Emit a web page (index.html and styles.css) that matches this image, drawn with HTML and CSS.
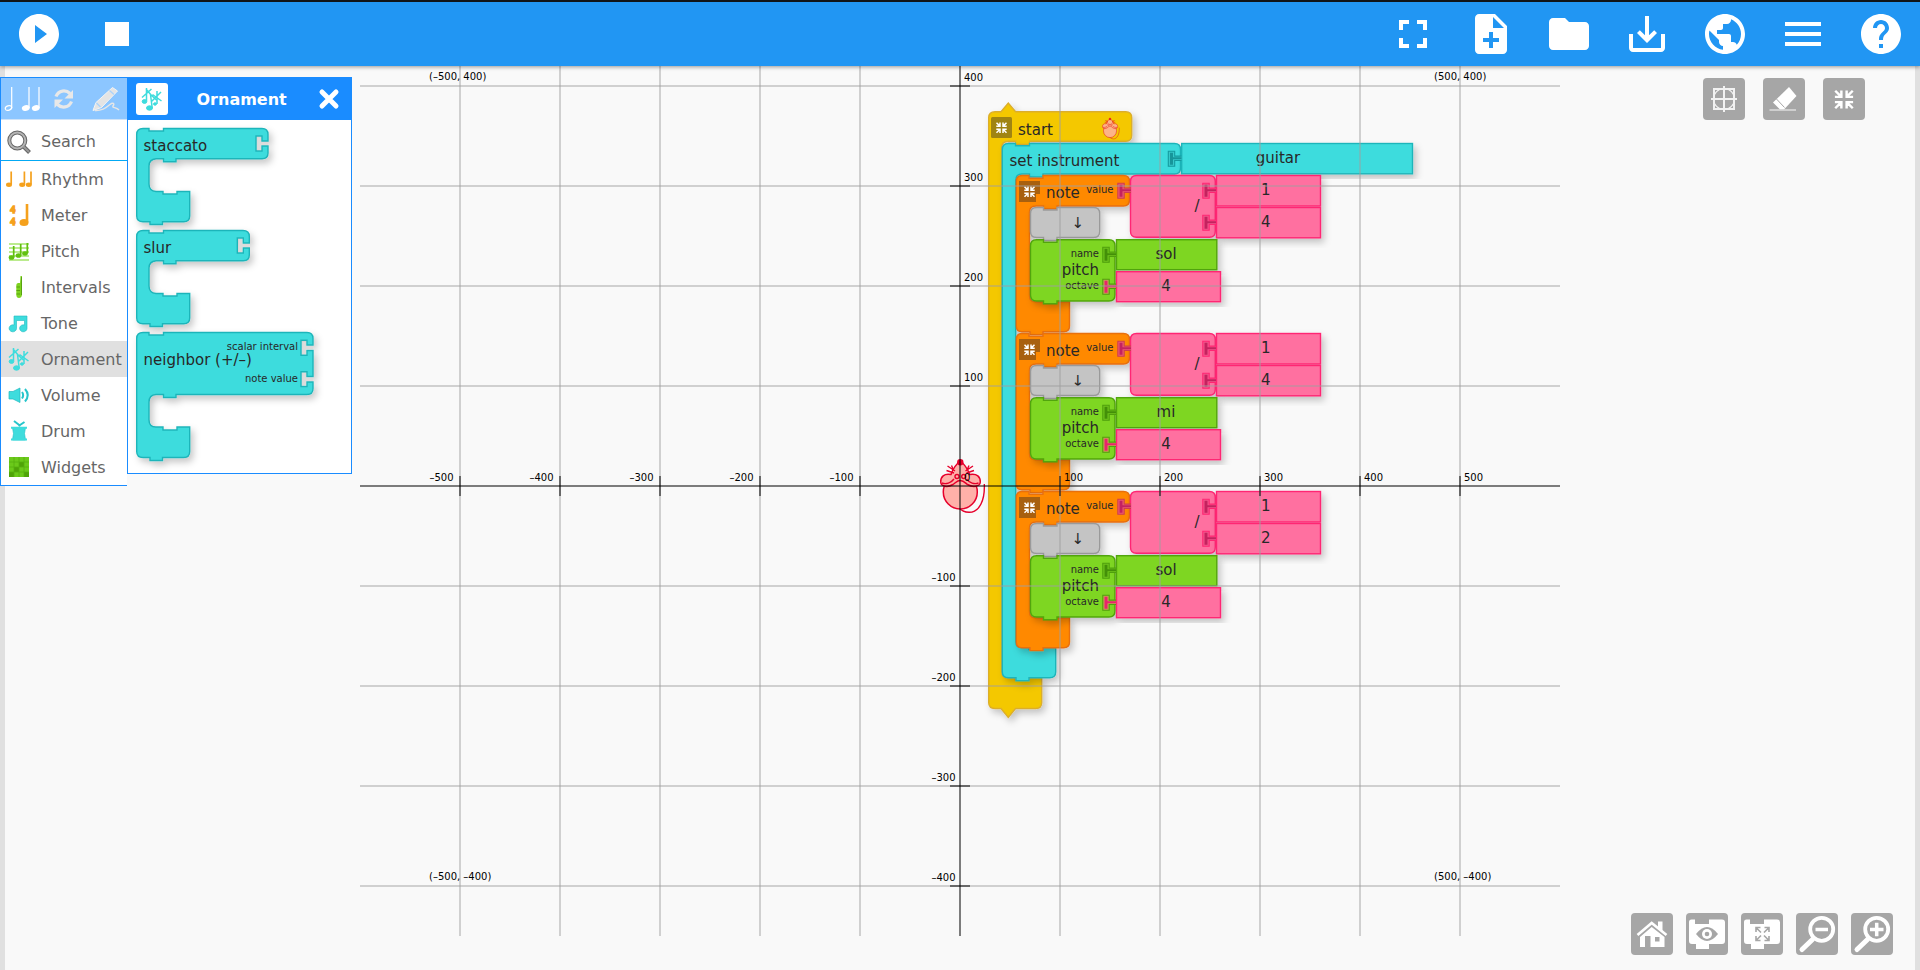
FILE: index.html
```html
<!DOCTYPE html>
<html lang="en">
<head>
<meta charset="utf-8">
<title>Music Blocks</title>
<link rel="stylesheet" href="styles.css">
</head>
<body>
<header class="navbar">
  <div class="nav-group">
    <button class="nav-btn" aria-label="Play"><svg viewBox="0 0 24 24"><path d="M12 2C6.48 2 2 6.48 2 12s4.48 10 10 10 10-4.48 10-10S17.52 2 12 2zm-2 14.5v-9l6 4.5-6 4.5z"/></svg></button>
    <button class="nav-btn" aria-label="Stop"><svg viewBox="0 0 24 24"><path d="M6 6h12v12H6z"/></svg></button>
  </div>
  <div class="nav-group">
    <button class="nav-btn" aria-label="Full screen"><svg viewBox="0 0 24 24"><path d="M7 14H5v5h5v-2H7v-3zm-2-4h2V7h3V5H5v5zm12 7h-3v2h5v-5h-2v3zM14 5v2h3v3h2V5h-5z"/></svg></button>
    <button class="nav-btn" aria-label="New project"><svg viewBox="0 0 24 24"><path d="M14 2H6c-1.1 0-1.99.9-1.99 2L4 20c0 1.1.89 2 1.99 2H18c1.1 0 2-.9 2-2V8l-6-6zm2 14h-3v3h-2v-3H8v-2h3v-3h2v3h3v2zm-3-7V3.5L18.5 9H13z"/></svg></button>
    <button class="nav-btn" aria-label="Load project"><svg viewBox="0 0 24 24"><path d="M10 4H4c-1.1 0-1.99.9-1.99 2L2 18c0 1.1.9 2 2 2h16c1.1 0 2-.9 2-2V8c0-1.1-.9-2-2-2h-8l-2-2z"/></svg></button>
    <button class="nav-btn" aria-label="Save project"><svg viewBox="0 0 24 24"><path d="M19 12v7H5v-7H3v7c0 1.1.9 2 2 2h14c1.1 0 2-.9 2-2v-7h-2zm-6 .67l2.59-2.58L17 11.5l-5 5-5-5 1.41-1.41L11 12.67V3h2v9.67z"/></svg></button>
    <button class="nav-btn" aria-label="Planet"><svg viewBox="0 0 24 24"><path d="M12 2C6.48 2 2 6.48 2 12s4.48 10 10 10 10-4.48 10-10S17.52 2 12 2zm-1 17.93c-3.95-.49-7-3.85-7-7.93 0-.62.08-1.21.21-1.79L9 15v1c0 1.1.9 2 2 2v1.930zm6.900-2.540c-.26-.81-1-1.390-1.900-1.390h-1v-3c0-.55-.45-1-1-1H8v-2h2c.55 0 1-.45 1-1V7h2c1.100 0 2-.9 2-2v-.41c2.930 1.190 5 4.060 5 7.410 0 2.080-.8 3.970-2.100 5.390z"/></svg></button>
    <button class="nav-btn" aria-label="Menu"><svg viewBox="0 0 24 24"><path d="M3 18h18v-2H3v2zm0-5h18v-2H3v2zm0-7v2h18V6H3z"/></svg></button>
    <button class="nav-btn" aria-label="Help"><svg viewBox="0 0 24 24"><path d="M12 2C6.48 2 2 6.48 2 12s4.48 10 10 10 10-4.48 10-10S17.52 2 12 2zm1 17h-2v-2h2v2zm2.070-7.750l-.9.92C13.450 12.900 13 13.500 13 15h-2v-.5c0-1.100.45-2.100 1.170-2.830l1.240-1.260c.37-.36.59-.86.59-1.410 0-1.100-.9-2-2-2s-2 .9-2 2H8c0-2.210 1.790-4 4-4s4 1.790 4 4c0 .88-.36 1.680-.93 2.250z"/></svg></button>
  </div>
</header>

<main class="stage">
<svg class="canvas" viewBox="0 66 1920 904" width="1920" height="904">
  <defs>
    <filter id="shadow" x="-10%" y="-10%" width="125%" height="125%"><feDropShadow dx="3" dy="4" stdDeviation="3.500" flood-color="#000" flood-opacity="0.22"/></filter>
    <g id="plug"><path d="M14 5.800H7.200V1H.8V16H7.200V10.200H14"/><path fill="currentColor" stroke="none" d="M2.500 2.500H5.500V7H14V9H5.500V14.500H2.500Z"/></g>
    <g id="shrink" fill="none" stroke-width="1.500"><path d="M-5-5L-1.800-1.800M5-5L1.800-1.800M-5 5L-1.800 1.800M5 5L1.800 1.800M-5.200-1.500H-1.500V-5.200M5.200-1.500H1.500V-5.200M-5.200 1.500H-1.500V5.200M5.200 1.500H1.500V5.200"/></g>
    <g id="mouse">
      <path class="m-line" d="M984.300 484C985 500 979.500 512.500 969 512.300C964 512 961 510 959.500 508"/>
      <circle class="m-skin" cx="960.300" cy="492" r="17"/>
      <path class="m-skin" d="M960.300 461C955 465 952.500 470 951 474.500C944 473 940.500 477 940.700 482C941 487 948 487.500 953 484.500C956 482.500 957 480.500 960.300 480.500C963.500 480.500 965 482.500 967.500 484.500C972.500 487.500 980 487 980.300 482C980.500 477 977 473 969.700 474.500C968 470 965.500 465 960.300 461Z"/>
      <path class="m-line" d="M942 483C946 484.500 951 483 954 479M978.500 483C974.500 484.500 969.500 483 966.500 479M955 471L947.500 466M954 473L946.500 470.500M953.500 470L951.500 465.500M965.500 471L973 466M966.500 473L974 470.500M967 470L969 465.500"/>
      <circle class="m-line" cx="957" cy="476.500" r="2"/><circle class="m-line" cx="963.700" cy="476.500" r="2"/>
      <circle class="m-nose" cx="960.300" cy="462.300" r="3.200"/>
    </g>
    <g id="note">
      <path class="blk orange" filter="url(#shadow)" d="M1022 175.500H1029V178.200H1043V175.500H1123.500Q1129.500 175.500 1129.500 181.500V200Q1129.500 206 1123.500 206H1057V209H1043.500V206H1036Q1029.500 206 1029.500 212V295.700Q1029.500 301.700 1036 301.700H1043V304H1057V301.700H1069.500V326Q1069.500 331.800 1063.500 331.800H1043V334.600H1030V331.800H1022Q1016.300 331.800 1016.300 326V181.500Q1016.300 175.500 1022 175.500Z"/>
      <path class="btn-note" d="M1019 181H1040V194H1036V202H1019Z"/>
      <use href="#shrink" x="1029.500" y="191.700" stroke="#fff"/>
      <text class="t" x="1046" y="198">note</text>
      <text class="s" x="1113.500" y="193" text-anchor="end">value</text>
      <path class="blk pink" filter="url(#shadow)" d="M1136.500 175.500H1209.500Q1215.300 175.500 1215.300 181.500V231.300Q1215.300 237.300 1209.500 237.300H1136.500Q1130.500 237.300 1130.500 231.300V181.500Q1130.500 175.500 1136.500 175.500Z"/>
      <use href="#plug" class="pl pl-pink-orange" x="1117" y="182.300"/>
      <text class="t" x="1197" y="211" text-anchor="middle">/</text>
      <g filter="url(#shadow)"><rect class="blk pink" x="1216.500" y="175.500" width="104" height="30.500"/><rect class="blk pink" x="1216.500" y="207.500" width="104" height="30.300"/></g>
      <use href="#plug" class="pl pl-pink" x="1202" y="182.300"/><use href="#plug" class="pl pl-pink" x="1202" y="214.300"/>
      <path class="blk grey" filter="url(#shadow)" d="M1036.500 207.500H1043.500V210H1057V207.500H1093.700Q1099.700 207.500 1099.700 213.500V231.500Q1099.700 237.500 1093.700 237.500H1057V240.500H1043.500V237.500H1036.500Q1030.500 237.500 1030.500 231.500V213.500Q1030.500 207.500 1036.500 207.500Z"/>
      <text class="t" x="1077.700" y="228" text-anchor="middle">↓</text>
      <path class="blk green" filter="url(#shadow)" d="M1036.500 239.700H1043.500V242.200H1057V239.700H1109Q1115 239.700 1115 245.700V295Q1115 301 1109 301H1057V303.700H1043.500V301H1036.500Q1030.500 301 1030.500 295V245.700Q1030.500 239.700 1036.500 239.700Z"/>
      <text class="s" x="1099" y="257" text-anchor="end">name</text>
      <text class="t" x="1099" y="275" text-anchor="end">pitch</text>
      <text class="s" x="1099" y="289" text-anchor="end">octave</text>
      <rect class="blk green" filter="url(#shadow)" x="1116.500" y="239.700" width="100.300" height="30"/>
      <rect class="blk pink" filter="url(#shadow)" x="1116.500" y="271.700" width="104" height="30"/>
      <use href="#plug" class="pl pl-green" x="1102" y="246.300"/><use href="#plug" class="pl pl-pink-green" x="1102" y="278.300"/>
      <text class="t" x="1265.800" y="194.700" text-anchor="middle">1</text>
      <text class="t" x="1166" y="291" text-anchor="middle">4</text>
    </g>
  </defs>

  <path class="blk yellow" filter="url(#shadow)" d="M995 111.700H1001L1008.300 103L1015.600 111.700H1125.700Q1131.700 111.700 1131.700 117.700V135.300Q1131.700 141.300 1125.700 141.300H1029.500V144.500H1015.500V141.300H1008Q1001.700 141.300 1001.700 148V672Q1001.700 678 1008 678H1015V680H1029V678H1041.700V702.500Q1041.700 708.500 1035.700 708.500H1015.500L1008.300 717.500L1001 708.500H995Q988.700 708.500 988.700 702.500V117.700Q988.700 111.700 995 111.700Z"/>
  <rect class="btn-start" x="991" y="117" width="21" height="21" rx="1.500"/>
  <use href="#shrink" x="1001.500" y="127.700" stroke="#fff"/>
  <text class="t" x="1018" y="135">start</text>
  <use class="mini" href="#mouse" transform="translate(740.300 -66) scale(.385 .4)"/>
  <path class="blk teal" filter="url(#shadow)" d="M1008.500 143.500H1015.500V145.700H1029.500V143.500H1174.500Q1180.500 143.500 1180.500 149.500V168Q1180.500 174 1174.500 174H1043V177H1029.500V174H1022Q1015.700 174 1015.700 180.500V641.700Q1015.700 647.700 1022 647.700H1029V649.500H1043V647.700H1055.700V672Q1055.700 677.700 1049.700 677.700H1029V680.700H1016V677.700H1008.500Q1002.300 677.700 1002.300 672V149.500Q1002.300 143.500 1008.500 143.500Z"/>
  <text class="t" x="1009.500" y="166">set instrument</text>
  <rect class="blk teal" filter="url(#shadow)" x="1181.700" y="143.500" width="230.800" height="30.300"/>
  <use href="#plug" class="pl pl-teal" x="1167.500" y="150.300"/>
  <text class="t" x="1278" y="162.700" text-anchor="middle">guitar</text>

  <use href="#note"/>
  <text class="t" x="1265.800" y="226.700" text-anchor="middle">4</text>
  <text class="t" x="1166" y="259" text-anchor="middle">sol</text>
  <use href="#note" y="158"/>
  <text class="t" x="1265.800" y="384.700" text-anchor="middle">4</text>
  <text class="t" x="1166" y="417" text-anchor="middle">mi</text>
  <use href="#note" y="316"/>
  <text class="t" x="1265.800" y="542.700" text-anchor="middle">2</text>
  <text class="t" x="1166" y="575" text-anchor="middle">sol</text>

  <use href="#mouse"/>

  <!-- cartesian grid and axes -->
  <path class="grid" d="M460 66V936M560 66V936M660 66V936M760 66V936M860 66V936M1060 66V936M1160 66V936M1260 66V936M1360 66V936M1460 66V936"/>
  <path class="grid" d="M360 86H1560M360 186H1560M360 286H1560M360 386H1560M360 586H1560M360 686H1560M360 786H1560M360 886H1560"/>
  <path class="axis" d="M960 66V936"/>
  <path class="axis" d="M360 486H1560"/>
  <path class="axis" d="M460 476V496M560 476V496M660 476V496M760 476V496M860 476V496M1060 476V496M1160 476V496M1260 476V496M1360 476V496M1460 476V496M950 86H970M950 186H970M950 286H970M950 386H970M950 586H970M950 686H970M950 786H970M950 886H970"/>
  <g class="lbl">
    <text x="429" y="80">(–500, 400)</text><text x="1434" y="80">(500, 400)</text>
    <text x="429" y="880">(–500, –400)</text><text x="1434" y="880">(500, –400)</text>
    <text x="964" y="81">400</text><text x="964" y="181">300</text><text x="964" y="281">200</text><text x="964" y="381">100</text>
    <text x="964" y="481">0</text>
    <text x="1064" y="481">100</text><text x="1164" y="481">200</text><text x="1264" y="481">300</text><text x="1364" y="481">400</text><text x="1464" y="481">500</text>
  </g>
  <g class="lbl" text-anchor="end">
    <text x="453.500" y="481">–500</text><text x="553.500" y="481">–400</text><text x="653.500" y="481">–300</text><text x="753.500" y="481">–200</text><text x="853.500" y="481">–100</text>
    <text x="955.500" y="581">–100</text><text x="955.500" y="681">–200</text><text x="955.500" y="781">–300</text><text x="955.500" y="881">–400</text>
  </g>
</svg>

<aside class="palette">
  <nav class="sidebar">
    <div class="tabs">
      <svg width="42" height="41" viewBox="0 0 42 41"><g fill="none" stroke="#fff" stroke-width="1.200"><path d="M10.700 9V30M28 9V30M38 9V30"/><ellipse cx="7.500" cy="30" rx="3.300" ry="2.200" transform="rotate(-20 7.500 30)"/></g><g fill="#fff"><ellipse cx="24.800" cy="30" rx="4" ry="2.900" transform="rotate(-15 24.800 30)"/><ellipse cx="34.800" cy="30" rx="4" ry="2.900" transform="rotate(-15 34.800 30)"/></g></svg>
      <svg width="42" height="41" viewBox="0 0 42 41"><g fill="none" stroke="#e8e8e8" stroke-width="3.200"><path d="M13 18.500C15.500 12 23 11.500 27 15.500"/><path d="M28.500 23.500C26 30 18.500 30.500 14.500 26.500"/></g><path d="M30 12V20.500H21.500ZM11.500 30V21.500H20Z" fill="#e8e8e8"/></svg>
      <svg width="42" height="41" viewBox="0 0 42 41"><path d="M8 32.500L11 24.500L27.500 9.500L32.500 13L16.500 29.500Z" fill="#e4e4e4" stroke="#f4f4f4" stroke-width="1"/><path d="M11.500 25L15.500 29M24.500 12.500L29 16.500" stroke="#a9d2fb" stroke-width="1.200"/><path d="M10 32.500C17 33 21 30 25 26.500C28 24 30 25.500 28 28C27 30 31 29 34 32" fill="none" stroke="#e6e6e6" stroke-width="1.500"/></svg>
    </div>
    <a class="row search"><svg viewBox="0 0 28 24"><path d="M18 17L24.500 23.500" stroke="#666" stroke-width="4"/><circle cx="12.300" cy="11.500" r="8" fill="none" stroke="#666" stroke-width="4"/><circle cx="12.300" cy="11.500" r="8" fill="none" stroke="#b5b5b5" stroke-width="2"/><path d="M18.500 17.500L24 23" stroke="#999" stroke-width="2"/></svg>Search</a>
    <a class="row"><svg viewBox="0 0 28 24"><g fill="#f5a11d"><ellipse cx="4" cy="17.700" rx="3" ry="2.200"/><ellipse cx="17.200" cy="17.700" rx="3" ry="2.200"/><ellipse cx="23.800" cy="17.700" rx="3" ry="2.200"/></g><path d="M6.200 4.500V17.500M19.400 4.500V17.500M26 4.500V17.500" stroke="#f5a11d" stroke-width="1.700"/></svg>Rhythm</a>
    <a class="row"><svg viewBox="0 0 28 24"><g class="meter"><text x="5.300" y="10">4</text><text x="5.300" y="21.500">4</text></g><ellipse cx="19" cy="19.500" rx="4.500" ry="3.600" fill="#f5a11d"/><path d="M22 1V19.500" stroke="#f5a11d" stroke-width="2.600"/></svg>Meter</a>
    <a class="row"><svg viewBox="0 0 28 24"><path d="M4 5H24M4 9H24M4 13H24M4 17H24M4 21H24" stroke="#a5e56a" stroke-width="1.500"/><g fill="#62c010"><ellipse cx="6.500" cy="18.500" rx="2.800" ry="2.300"/><ellipse cx="13.500" cy="16.500" rx="2.800" ry="2.300"/><ellipse cx="20" cy="14.500" rx="2.800" ry="2.300"/></g><path d="M8.700 7V18.500M15.700 5V16.500M22.300 4V14.500" stroke="#62c010" stroke-width="1.700"/></svg>Pitch</a>
    <a class="row"><svg viewBox="0 0 28 24"><path d="M15.500 1H17V20Q16.500 23 14 23Q11.500 23 11.300 20V10Q11.300 8.500 13 8H15Z" fill="#7ed321"/><path d="M11.500 12H15M11.500 15.500H15M11.500 19H15M16.500 2V20" stroke="#58a30f"/></svg>Intervals</a>
    <a class="row"><svg viewBox="0 0 28 24"><g fill="#3edcdd" stroke="#1fb9c0" stroke-width=".6"><path d="M9 5H22V17.500A3.700 3.500 0 1 1 19.500 14V9.500H11.500V17.500A3.700 3.500 0 1 1 9 14Z"/></g></svg>Tone</a>
    <a class="row active"><svg viewBox="0 0 28 24"><g id="orn" fill="#3edcdd" stroke="#3edcdd"><ellipse cx="6.500" cy="14.500" rx="2.300" ry="1.900"/><ellipse cx="11.500" cy="21" rx="3" ry="2.200"/><ellipse cx="17" cy="17" rx="1.500" ry="1.200"/><g fill="none" stroke-width="1.500"><path d="M8.500 14V1M4 10.500L13.500 2M8 2L13.500 8.500M14.200 21L12.500 7.500L18.500 13M19 4V17M13.500 14.500L23 5M14.500 7.500L23.500 14"/></g></g></svg>Ornament</a>
    <a class="row"><svg viewBox="0 0 28 24"><path d="M4 8.500H8L15 5V19.500L8 16H4Z" fill="#3edcdd" stroke="#1fb9c0" stroke-width=".7"/><path d="M17 9Q19.300 12 17 15.500M20 6Q25.500 12 20 18.500" fill="none" stroke="#27c5cb" stroke-width="2"/></svg>Volume</a>
    <a class="row"><svg viewBox="0 0 28 24"><path d="M7.500 8.500H20.500L19.500 14.500L20.500 21H7.500L8.500 14.500Z" fill="#3edcdd" stroke="#27c5cb" stroke-width=".7"/><path d="M6 8.700H22M6 20.500H22" stroke="#3edcdd" stroke-width="2"/><path d="M9 2L15.500 7M19.500 3L13.500 7" stroke="#27c5cb" stroke-width="2" fill="none"/></svg>Drum</a>
    <a class="row"><svg viewBox="0 0 28 24"><path fill="#6bc91a" d="M4 2H24V22H4Z"/><path fill="#4fa308" d="M14 7H19V12H14ZM9 12H14V17H9ZM4 17H9V22H4ZM19 17H24V22H19Z"/><path d="M4 7H24M4 12H24M4 17H24M9 2V22M14 2V22M19 2V22" stroke="#57b010" stroke-width=".8"/></svg>Widgets</a>
  </nav>
  <section class="drawer">
    <div class="drawer-head">
      <span class="drawer-icon"><svg width="28" height="24" viewBox="0 0 28 24"><use href="#orn"/></svg></span>
      <h2>Ornament</h2>
      <svg class="close" width="22" height="22" viewBox="0 0 22 22"><path d="M4 4L18 18M18 4L4 18" stroke="#fff" stroke-width="5" stroke-linecap="round"/></svg>
    </div>
    <svg class="blocks" width="223" height="353" viewBox="128 120 223 353">
      <g filter="url(#shadow)"><path class="blk teal" d="M143 128.500H149V131H163.500V128.500H262Q268 128.500 268 134.500V141H262V136H256V151H262V146H268V153Q268 158.800 262 158.800H176V161.700H163.500V158.800H156Q149 159.500 149 166V184Q149 191 156 191.500H163V194H177V191.500H189.700V216Q189.700 221.700 183.700 221.700H162.500V224.500H150V221.700H143Q136.700 221.700 136.700 216V134.500Q136.700 128.500 143 128.500Z"/></g>
      <g filter="url(#shadow)"><path class="blk teal" d="M143 230.500H149V233H163.500V230.500H243Q249.300 230.500 249.300 236.500V243H243.300V238H237.300V253H243.300V248H249.300V255Q249.300 260.800 243.300 260.800H176V263.700H163.500V260.800H156Q149 261.500 149 268V286Q149 293 156 293.500H163V296H177V293.500H189.700V318Q189.700 323.700 183.700 323.700H162.500V326.500H150V323.700H143Q136.700 323.700 136.700 318V236.500Q136.700 230.500 143 230.500Z"/></g>
      <g filter="url(#shadow)"><path class="blk teal" d="M143 332.500H149V335H163.500V332.500H307Q313 332.500 313 338.500V345H307V340.300H301V355.300H307V350.500H313V376.500H307V371.700H301V386.500H307V382H313V388.500Q313 394.500 307 394.500H176V397.500H163.500V394.500H156Q149 395 149 402V420Q149 427 156 427H163V430H177V427H189.700V451.500Q189.700 457.500 183.700 457.500H162.500V460.500H150V457.500H143Q136.700 457.500 136.700 451.500V338.500Q136.700 332.500 143 332.500Z"/></g>
      <path class="sock" d="M257.200 137.200H260.800V142.200H268V144.800H260.800V149.800H257.200ZM238.500 239.200H242.100V244.200H249.300V246.800H242.100V251.800H238.500ZM302.200 341.500H305.800V346.200H313V349.300H305.800V354H302.200ZM302.200 372.900H305.800V377.700H313V380.800H305.800V385.300H302.200Z"/>
      <text class="t" x="143.500" y="151">staccato</text>
      <text class="t" x="143.500" y="253">slur</text>
      <text class="t" x="143.500" y="364.700">neighbor (+/–)</text>
      <text class="s" x="298" y="350" text-anchor="end">scalar interval</text>
      <text class="s" x="298" y="382" text-anchor="end">note value</text>
    </svg>
  </section>
</aside>

<div class="tools tools-top">
  <button class="tool" aria-label="Grid"><svg viewBox="0 0 42 42"><g fill="none" stroke="#f2f2f2" stroke-width="2"><path d="M11 11H31V31H11ZM21 8V34M8 21H34"/><circle cx="21" cy="21" r="10.500" stroke-width="1.200"/></g></svg></button>
  <button class="tool" aria-label="Clean"><svg viewBox="0 0 42 42"><path d="M26 9L33.500 18L21 31.500H17L10 24.500Z" fill="#fff"/><path d="M6.500 32H33" stroke="#ddd" stroke-width="1.500"/><path d="M13.500 21L21.500 29.500" stroke="#a6a6a6"/></svg></button>
  <button class="tool" aria-label="Collapse"><svg viewBox="0 0 42 42"><g transform="translate(21 21.500) scale(1.750)"><path d="M-5-5L-1.800-1.800M5-5L1.800-1.800M-5 5L-1.800 1.800M5 5L1.800 1.800M-5.200-1.500H-1.500V-5.200M5.200-1.500H1.500V-5.200M-5.200 1.500H-1.500V5.200M5.200 1.500H1.500V5.200" fill="none" stroke="#fff" stroke-width="1.400"/></g></svg></button>
</div>
<div class="tools tools-bottom">
  <button class="tool" aria-label="Home"><svg viewBox="0 0 42 42"><path d="M27 8.500H31.500V18L27 14Z" fill="#fff"/><path d="M6.500 22L20.700 10L35.500 22" fill="none" stroke="#fff" stroke-width="2.600"/><path d="M9 24L20.700 14L33.500 24V34H19.500V23H14V34H9Z" fill="#fff"/><path d="M24 24H28.500V28.500H24Z" fill="#a6a6a6"/></svg></button>
  <button class="tool" aria-label="Show blocks"><svg viewBox="0 0 42 42"><path d="M5.500 6.500H9V11H23V6.500H36Q39 6.500 39 9.500V28Q39 31 36 31H23V36H10V31H6Q3 31 3 28V9Q3 6.500 5.500 6.500Z" fill="#fff"/><path d="M10 21Q21 7 32 21Q21 35 10 21Z" fill="#a6a6a6"/><circle cx="21" cy="21" r="5" fill="#fff"/><circle cx="21" cy="21" r="2.300" fill="#a6a6a6"/></svg></button>
  <button class="tool" aria-label="Expand blocks"><svg viewBox="0 0 42 42"><path d="M5.500 6.500H9V11H23V6.500H36Q39 6.500 39 9.500V28Q39 31 36 31H23V36H10V31H6Q3 31 3 28V9Q3 6.500 5.500 6.500Z" fill="#fff"/><path d="M15 19V14.500H19.500M15 14.500L20 19.500M23.500 14.500H28V19M28 14.500L23 19.500M15 23V27.500H19.500M15 27.500L20 22.500M28 23V27.500H23.500M28 27.500L23 22.500" fill="none" stroke="#a6a6a6" stroke-width="1.600"/></svg></button>
  <button class="tool" aria-label="Zoom out"><svg viewBox="0 0 42 42"><g fill="none" stroke="#fff"><circle cx="25.700" cy="16.300" r="11.500" stroke-width="3.800"/><path d="M16.500 26.500L6 36.500" stroke-width="5" stroke-linecap="round"/><path d="M19.500 16.500H32" stroke-width="3.500"/></g></svg></button>
  <button class="tool" aria-label="Zoom in"><svg viewBox="0 0 42 42"><g fill="none" stroke="#fff"><circle cx="25.700" cy="16.300" r="11.500" stroke-width="3.800"/><path d="M16.500 26.500L6 36.500" stroke-width="5" stroke-linecap="round"/><path d="M19 16.500H32.500M25.700 9.700V23.200" stroke-width="3.500"/></g></svg></button>
</div>
</main>
</body>
</html>
```
FILE: styles.css
```css
* { box-sizing: border-box; }
html, body { margin: 0; height: 970px; overflow: hidden; }
body {
  display: flex;
  flex-direction: column;
  font-family: "DejaVu Sans", sans-serif;
  background: #f9f9f9;
}
button { border: 0; padding: 0; margin: 0; background: none; }
svg { display: block; flex: none; }

/* top bar */
.navbar {
  position: relative;
  z-index: 2;
  display: flex;
  flex: none;
  justify-content: space-between;
  height: 66px;
  border-top: 2px solid #101418;
  background: #2196f3;
  box-shadow: 0 1px 4px rgba(0, 0, 0, .4);
}
.nav-group { display: flex; }
.nav-btn { width: 78px; height: 64px; padding: 8px 15px; }
.nav-btn svg { width: 48px; height: 48px; fill: #fff; }

/* work area */
.stage {
  position: relative;
  flex: 1;
  border: solid #e0e0e0;
  border-width: 0 5px;
}
.canvas { position: absolute; top: 0; left: -5px; }
.grid { fill: none; stroke: #a0a0a0; stroke-opacity: .46; stroke-width: 2; }
.axis { fill: none; stroke: #000; stroke-opacity: .5; stroke-width: 2; }
.lbl { font-size: 10px; fill: #000; }
.t { font-size: 15px; fill: #282828; }
.s { font-size: 10px; fill: #282828; }

.blk { stroke-width: 1.4; }
.yellow { fill: #f4c800; stroke: #dcae2c; }
.teal { fill: #3edcdd; stroke: #1fb5ba; }
.orange { fill: #ff8900; stroke: #e86f10; }
.pink { fill: #ff6fa0; stroke: #ff2673; }
.green { fill: #7ed621; stroke: #51a50c; }
.grey { fill: #c4c4c4; stroke: #9a9a9a; }
.btn-start { fill: #a08412; }
.btn-note { fill: #a8600f; }

/* argument plugs: fill = socket, stroke = rim, color = tongue */
.pl { stroke-width: 1.1; }
.pl-teal { fill: #36c8ca; stroke: #159a9f; color: #17959a; }
.pl-pink { fill: #f2568b; stroke: #ff2673; color: #c4225f; }
.pl-pink-orange { fill: #ec5a72; stroke: #cf3f4c; color: #c4225f; }
.pl-pink-green { fill: #c9a050; stroke: #4f9f0c; color: #e8246c; }
.pl-green { fill: #70c61c; stroke: #4f9f0c; color: #438f08; }
.sock { fill: #dcdcdc; }

.m-skin { fill: #ffb0a9; stroke: #e6002b; stroke-width: 1.5; }
.m-line { fill: none; stroke: #e6002b; stroke-width: 1.4; }
.m-nose { fill: #e6002b; }
.mini { opacity: .8; }

/* palette: category list and open drawer */
.palette {
  position: absolute;
  top: 11px;
  left: -5px;
  display: flex;
  align-items: flex-start;
}
.sidebar {
  width: 127px;
  border: solid #1a8cff;
  border-width: 1px 0 1px 1px;
  background: #fff;
}
.tabs { display: flex; height: 42px; background: #8cc6ff; border-bottom: 1px solid #cfe3f8; }
.row {
  display: flex;
  align-items: center;
  gap: 8px;
  height: 36px;
  padding-left: 4px;
  font-size: 16px;
  color: #666;
  white-space: nowrap;
}
.row svg { width: 28px; height: 24px; overflow: visible; }
.search { height: 41px; padding-top: 3px; border-bottom: 1px solid #03a9f4; }
.search svg { position: relative; top: -1px; }
.active { background: #e0e0e0; }
.meter { font: bold 10px "Liberation Serif", serif; fill: #f5a11d; stroke: #f5a11d; stroke-width: 1.4; }

.drawer { width: 225px; border: 1px solid #1a8cff; background: #fff; }
.drawer-head {
  display: flex;
  align-items: center;
  height: 42px;
  padding: 0 11px 0 8px;
  background: #1a8cff;
  color: #fff;
}
.drawer-icon {
  display: flex;
  align-items: center;
  justify-content: center;
  width: 32px;
  height: 32px;
  border-radius: 3px;
  background: #fff;
}
.drawer-head h2 { margin: 0 auto 0 28.5px; font-size: 16px; font-weight: bold; }

/* floating tool buttons */
.tools { position: absolute; display: flex; }
.tools-top { top: 12px; right: 50px; gap: 18px; }
.tools-bottom { top: 847px; right: 22px; gap: 13px; }
.tool { width: 42px; height: 42px; border-radius: 4px; background: #a6a6a6; }
.tool svg { width: 42px; height: 42px; }
```
